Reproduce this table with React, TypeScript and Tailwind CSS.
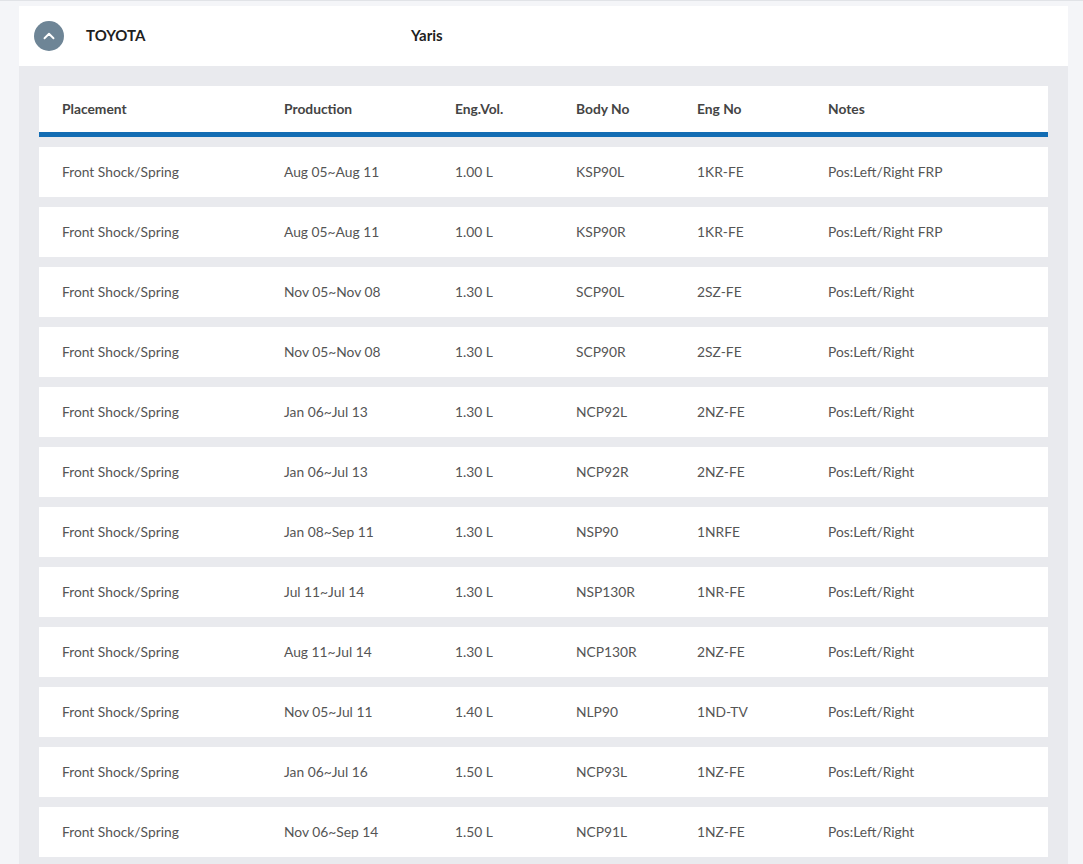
import { ChevronUp } from "lucide-react";

interface Part {
  placement: string;
  production: string;
  engVol: string;
  bodyNo: string;
  engNo: string;
  notes: string;
}

const rows: Part[] = [
  { placement: "Front Shock/Spring", production: "Aug 05~Aug 11", engVol: "1.00 L", bodyNo: "KSP90L", engNo: "1KR-FE", notes: "Pos:Left/Right FRP" },
  { placement: "Front Shock/Spring", production: "Aug 05~Aug 11", engVol: "1.00 L", bodyNo: "KSP90R", engNo: "1KR-FE", notes: "Pos:Left/Right FRP" },
  { placement: "Front Shock/Spring", production: "Nov 05~Nov 08", engVol: "1.30 L", bodyNo: "SCP90L", engNo: "2SZ-FE", notes: "Pos:Left/Right" },
  { placement: "Front Shock/Spring", production: "Nov 05~Nov 08", engVol: "1.30 L", bodyNo: "SCP90R", engNo: "2SZ-FE", notes: "Pos:Left/Right" },
  { placement: "Front Shock/Spring", production: "Jan 06~Jul 13", engVol: "1.30 L", bodyNo: "NCP92L", engNo: "2NZ-FE", notes: "Pos:Left/Right" },
  { placement: "Front Shock/Spring", production: "Jan 06~Jul 13", engVol: "1.30 L", bodyNo: "NCP92R", engNo: "2NZ-FE", notes: "Pos:Left/Right" },
  { placement: "Front Shock/Spring", production: "Jan 08~Sep 11", engVol: "1.30 L", bodyNo: "NSP90", engNo: "1NRFE", notes: "Pos:Left/Right" },
  { placement: "Front Shock/Spring", production: "Jul 11~Jul 14", engVol: "1.30 L", bodyNo: "NSP130R", engNo: "1NR-FE", notes: "Pos:Left/Right" },
  { placement: "Front Shock/Spring", production: "Aug 11~Jul 14", engVol: "1.30 L", bodyNo: "NCP130R", engNo: "2NZ-FE", notes: "Pos:Left/Right" },
  { placement: "Front Shock/Spring", production: "Nov 05~Jul 11", engVol: "1.40 L", bodyNo: "NLP90", engNo: "1ND-TV", notes: "Pos:Left/Right" },
  { placement: "Front Shock/Spring", production: "Jan 06~Jul 16", engVol: "1.50 L", bodyNo: "NCP93L", engNo: "1NZ-FE", notes: "Pos:Left/Right" },
  { placement: "Front Shock/Spring", production: "Nov 06~Sep 14", engVol: "1.50 L", bodyNo: "NCP91L", engNo: "1NZ-FE", notes: "Pos:Left/Right" },
];

// column widths follow the header offsets
const cols = "grid grid-cols-[222px_171px_121px_121px_131px_1fr] pl-[23px]";

export default function App() {
  return (
    <div className="min-h-[864px] bg-[#f4f5f8] font-['Lato',sans-serif] border-t border-[#e1e3e7]">
      <div className="ml-[19px] mr-[15px] pt-[5px]">
        {/* header of the accordion */}
        <div className="flex items-center h-[60px] bg-white pb-[2px]">
          <button className="ml-[15px] mt-[2px] w-[30px] h-[30px] rounded-full bg-[#6e8596] flex items-center justify-center">
            <ChevronUp className="w-[18px] h-[18px] text-white" strokeWidth={2.5} />
          </button>
          <span className="ml-[22px] w-[325px] text-[15px] font-bold text-[#1f1f1f]">TOYOTA</span>
          <span className="text-[15px] font-bold text-[#1f1f1f]">Yaris</span>
        </div>

        {/* table body */}
        <div className="bg-[#e9eaee] px-5 pt-5 pb-[10px]">
          <div className="bg-white">
            <div className={`${cols} h-[46px] items-center text-[13.8px] font-bold text-[#444]`}>
              <span>Placement</span>
              <span>Production</span>
              <span>Eng.Vol.</span>
              <span>Body No</span>
              <span>Eng No</span>
              <span>Notes</span>
            </div>
            <div className="h-[5px] bg-[#136db4]" />
          </div>
          <div className="flex flex-col gap-[10px] mt-[10px]">
            {rows.map((r, i) => (
              <div key={i} className={`${cols} h-[50px] items-center bg-white text-[13.8px] text-[#555]`}>
                <span>{r.placement}</span>
                <span>{r.production}</span>
                <span>{r.engVol}</span>
                <span>{r.bodyNo}</span>
                <span>{r.engNo}</span>
                <span>{r.notes}</span>
              </div>
            ))}
          </div>
        </div>
      </div>
    </div>
  );
}
